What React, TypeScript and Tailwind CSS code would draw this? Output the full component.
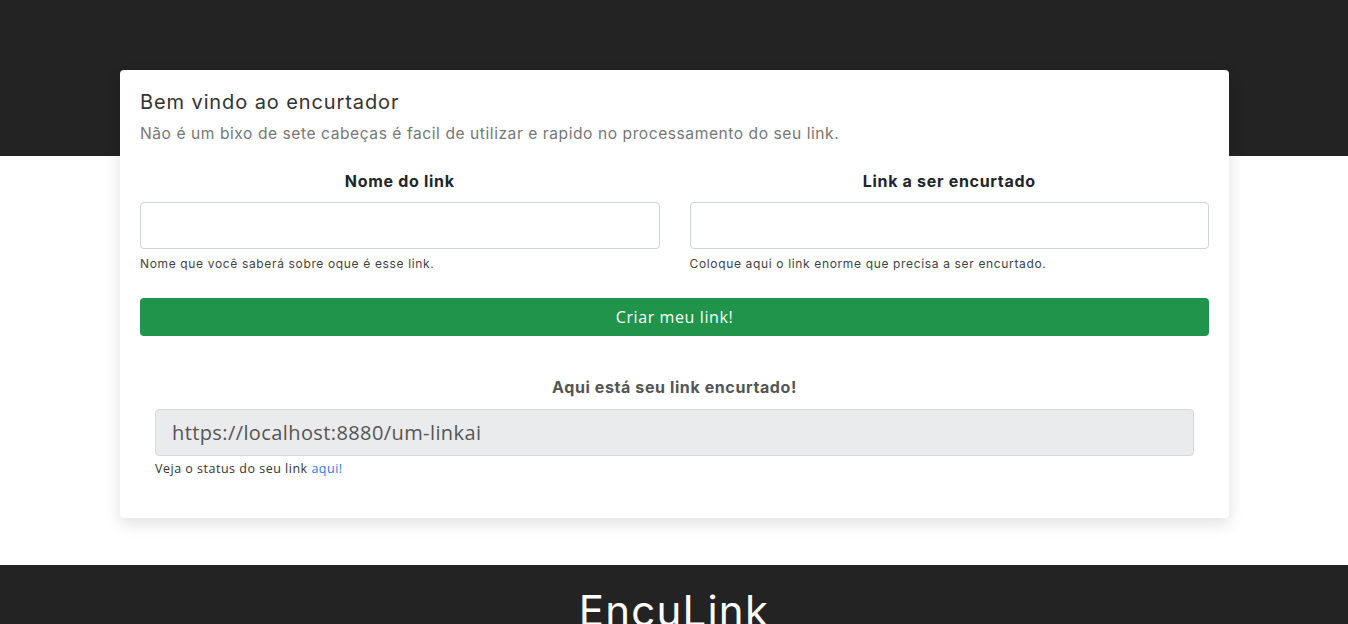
import React from "react";

function Field({ label, help }: { label: string; help: string }) {
  return (
    <div className="flex flex-col">
      <label className="text-center text-[16px] font-bold leading-[24px] tracking-[0.7px] text-[#212529]">{label}</label>
      <input
        type="text"
        className="mt-[9px] h-[47px] w-full rounded-[4px] border border-[#ced4da] bg-white px-3 outline-none"
      />
      <small className="mt-[6px] text-[12px] leading-[18px] tracking-[0.65px] text-[#3f3f3f]">{help}</small>
    </div>
  );
}

export default function App() {
  return (
    <div className="min-h-[624px] bg-white font-['Inter','Open_Sans',sans-serif] text-[#212529]">
      <div className="relative">
        <div className="h-[156px] bg-[#232323]" />
        <div className="h-[409px] bg-white" />
        <div className="absolute left-[120px] top-[70px] w-[1109px] rounded-[4px] bg-white px-[20px] pb-[40px] pt-[20px] shadow-[0_6px_16px_rgba(0,0,0,0.12)]">
          <h1 className="text-[20px] font-normal leading-[24px] tracking-[0.9px] text-[#333]">Bem vindo ao encurtador</h1>
          <p className="mt-[9px] text-[15.6px] leading-[22px] tracking-[0.55px] text-[#777]">
            Não é um bixo de sete cabeças é facil de utilizar e rapido no processamento do seu link.
          </p>
          <div className="mt-[24px] grid grid-cols-2 gap-[30px]">
            <Field label="Nome do link" help="Nome que você saberá sobre oque é esse link." />
            <Field label="Link a ser encurtado" help="Coloque aqui o link enorme que precisa a ser encurtado." />
          </div>
          <button
            type="button"
            className="mt-[25px] h-[38px] w-full rounded-[4px] bg-[#20944a] font-['Open_Sans',sans-serif] text-[16px] tracking-[0.6px] text-white"
          >
            Criar meu link!
          </button>
          <div className="mt-[40px] px-[15px]">
            <p className="text-center text-[16px] font-bold leading-[22px] tracking-[0.6px] text-[#555]">Aqui está seu link encurtado!</p>
            <div className="mt-[11px] flex h-[47px] items-center rounded-[4px] border border-[#d6d9dc] bg-[#e9ebed] px-[16px] font-['Open_Sans',sans-serif] text-[20px] tracking-[0.4px] text-[#555]">
              https://localhost:8880/um-linkai
            </div>
            <p className="mt-[4px] font-['Open_Sans',sans-serif] text-[12.5px] leading-[18px] tracking-[0.5px] text-[#333]">
              Veja o status do seu link <a className="text-[#2a7ae2]" href="#">aqui!</a>
            </p>
          </div>
        </div>
      </div>
      <footer className="flex h-[59px] justify-center overflow-hidden bg-[#232323] pt-[22px]">
        <span className="text-[42px] leading-[48px] tracking-[1.2px] text-white">EncuLink</span>
      </footer>
    </div>
  );
}
